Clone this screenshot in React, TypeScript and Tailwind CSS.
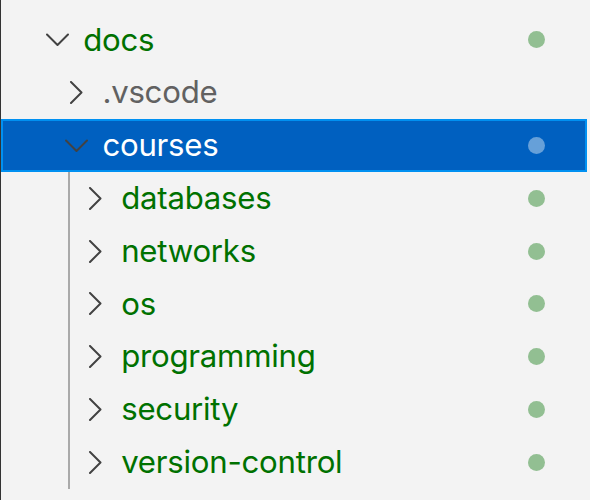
import React from "react";

const ChevronDown = () => (
  <svg width="23" height="23" viewBox="0 0 23 23" fill="none">
    <polyline points="1,6.5 11.5,17 22,6.5" stroke="#424242" strokeWidth="2" strokeLinecap="round" strokeLinejoin="round" fill="none" />
  </svg>
);

const ChevronRight = () => (
  <svg width="23" height="23" viewBox="0 0 23 23" fill="none">
    <polyline points="6,1 16.5,11.5 6,22" stroke="#424242" strokeWidth="2" strokeLinecap="round" strokeLinejoin="round" fill="none" />
  </svg>
);

const children = ["databases", "networks", "os", "programming", "security", "version-control"];

export default function App() {
  return (
    <div
      className="w-[590px] h-[500px] bg-[#f3f3f3] border-l border-[#333333] overflow-hidden"
      style={{ fontFamily: "Inter, 'Noto Sans', 'Liberation Sans', sans-serif" }}
    >
      <div className="w-[586px] pt-[13.6px] text-[31.2px] tracking-[-0.25px]">
        {/* docs */}
        <div className="flex items-center h-[52.8px] pl-[44.6px] pr-[42px]">
          <div className="w-[37.6px] flex items-center shrink-0">
            <ChevronDown />
          </div>
          <span className="text-[#007100]">docs</span>
          <span className="ml-auto w-[17px] h-[17px] rounded-full bg-[#92bf92]" />
        </div>
        {/* .vscode */}
        <div className="flex items-center h-[52.8px] pl-[63.8px] pr-[42px]">
          <div className="w-[37.6px] flex items-center shrink-0">
            <ChevronRight />
          </div>
          <span className="text-[#616161]">.vscode</span>
        </div>
        {/* courses (selected) */}
        <div className="flex items-center h-[52.8px] pl-[61.8px] pr-[40px] bg-[#0060c0] border-2 border-[#0090f1]">
          <div className="w-[37.6px] flex items-center shrink-0">
            <ChevronDown />
          </div>
          <span className="text-white">courses</span>
          <span className="ml-auto w-[17px] h-[17px] rounded-full bg-[#66a0d9]" />
        </div>
        {/* children */}
        <div className="ml-[67px] border-l-2 border-[#a9a9a9]">
          {children.map((name) => (
            <div key={name} className="flex items-center h-[52.8px] pl-[13.6px] pr-[42px]">
              <div className="w-[37.6px] flex items-center shrink-0">
                <ChevronRight />
              </div>
              <span className="text-[#007100]">{name}</span>
              <span className="ml-auto w-[17px] h-[17px] rounded-full bg-[#92bf92]" />
            </div>
          ))}
        </div>
      </div>
    </div>
  );
}
